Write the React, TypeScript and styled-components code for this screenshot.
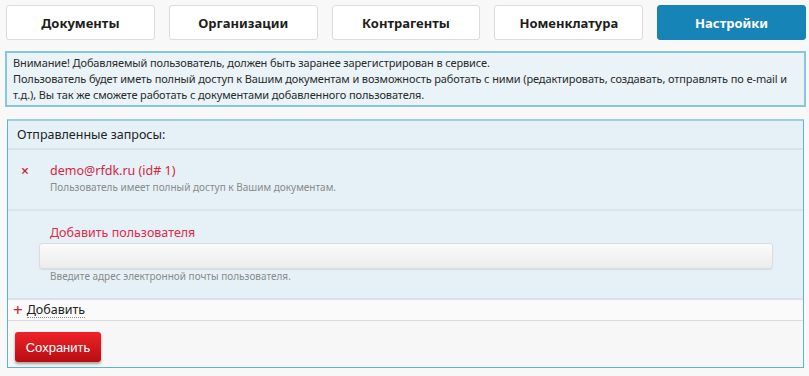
import styled, { createGlobalStyle } from "styled-components";

const Global = createGlobalStyle`
  body {
    margin: 0;
    background: #f8f8f8;
    font-family: "Noto Sans", "Open Sans", sans-serif;
    color: #222;
  }
`

const Page = styled.div`
  width: 809px;
  padding: 5px 3px 0 6px;
  box-sizing: border-box;
`

const Tabs = styled.div`
  display: grid;
  grid-template-columns: repeat(5, 1fr);
  column-gap: 14px;
`

const Tab = styled.div<{ $active?: boolean }>`
  height: 35px;
  box-sizing: border-box;
  display: flex;
  align-items: center;
  justify-content: center;
  border-radius: 3px;
  font-size: 13px;
  font-weight: 700;
  border: 1px solid ${(p) => (p.$active ? "#1583b6" : "#dcdcdc")};
  background: ${(p) => (p.$active ? "#1784b7" : "#fff")};
  color: ${(p) => (p.$active ? "#fff" : "#1d1d1d")};
`

const Notice = styled.div`
  margin: 11px 0 0 -1px;
  border: 2px solid #86c6de;
  background: #e9f3f8;
  padding: 2px 4px 2px 6px;
  font-size: 11px;
  letter-spacing: -0.12px;
  line-height: 16px;
  color: #2a2a2a;
`

const Panel = styled.div`
  margin: 12px 2px 0 1px;
  border: 1px solid #5bb4d6;
  border-top-color: #9bd0e4;
  border-top-width: 2px;
`

const PanelHead = styled.div`
  height: 27px;
  display: flex;
  align-items: center;
  padding-left: 9px;
  font-size: 12.5px;
  background: #e6f1f7;
  border-bottom: 2px solid #dce3e7;
`

const Request = styled.div`
  display: flex;
  gap: 21px;
  padding: 13px 0 14px 13px;
  background: #e6f1f7;
  border-bottom: 2px solid #dde4e8;
`

const Remove = styled.span`
  color: #c42a2f;
  font-size: 14px;
  line-height: 16px;
  font-weight: 600;
`

const Email = styled.div`
  color: #d8243f;
  font-size: 12.5px;
  line-height: 16px;
`

const Hint = styled.div`
  color: #8a8a8a;
  font-size: 10px;
  line-height: 16px;
`

const AddSection = styled.div`
  background: #e6f1f7;
  padding: 14px 30px 15px 31px;
  border-bottom: 2px solid #dbe1e4;
`

const AddLabel = styled.div`
  color: #e12a4c;
  font-size: 12.5px;
  line-height: 16px;
  padding-left: 11px;
`

const Input = styled.input`
  display: block;
  width: 100%;
  height: 26px;
  box-sizing: border-box;
  margin-top: 2px;
  border: 1px solid #dcdcdc;
  border-radius: 3px;
  background: linear-gradient(#fbfbfb, #ececec);
  box-shadow: 0 1px 1px rgba(0, 0, 0, 0.08);
  outline: none;
`

const InputHint = styled(Hint)`
  padding-left: 11px;
  margin-top: 1px;
  line-height: 13px;
`

const AddRow = styled.div`
  height: 20px;
  display: flex;
  align-items: center;
  gap: 4px;
  padding-left: 5px;
  background: #fafafa;
  border-bottom: 1px solid #dcdcdc;
  font-size: 12.5px;
`

const Plus = styled.span`
  color: #d0212c;
  font-size: 17px;
  line-height: 16px;
`

const AddLink = styled.span`
  border-bottom: 1px dotted #888;
  line-height: 14px;
  color: #222;
`

const Footer = styled.div`
  background: #f7f7f7;
  padding: 11px 0 5px 7px;
`

const SaveButton = styled.button`
  display: block;
  width: 86px;
  height: 30px;
  border: none;
  border-radius: 3px;
  background: linear-gradient(#ee2328, #b80d12);
  box-shadow: 0 2px 3px rgba(0, 0, 0, 0.35);
  color: #fff;
  font-family: "Liberation Sans", Arial, sans-serif;
  font-size: 13px;
  cursor: pointer;
`

const tabs = ["Документы", "Организации", "Контрагенты", "Номенклатура", "Настройки"]

export default function App() {
  return (
    <Page>
      <Global />
      <Tabs>
        {tabs.map((t, i) => (
          <Tab key={t} $active={i === tabs.length - 1}>{t}</Tab>
        ))}
      </Tabs>
      <Notice>
        Внимание! Добавляемый пользователь, должен быть заранее зарегистрирован в сервисе.
        <br />
        Пользователь будет иметь полный доступ к Вашим документам и возможность работать с ними (редактировать, создавать, отправлять по e-mail и т.д.), Вы так же сможете работать с документами добавленного пользователя.
      </Notice>
      <Panel>
        <PanelHead>Отправленные запросы:</PanelHead>
        <Request>
          <Remove>×</Remove>
          <div>
            <Email>demo@rfdk.ru (id# 1)</Email>
            <Hint>Пользователь имеет полный доступ к Вашим документам.</Hint>
          </div>
        </Request>
        <AddSection>
          <AddLabel>Добавить пользователя</AddLabel>
          <Input type="text" />
          <InputHint>Введите адрес электронной почты пользователя.</InputHint>
        </AddSection>
        <AddRow>
          <Plus>+</Plus>
          <AddLink>Добавить</AddLink>
        </AddRow>
        <Footer>
          <SaveButton>Сохранить</SaveButton>
        </Footer>
      </Panel>
    </Page>
  )
}
